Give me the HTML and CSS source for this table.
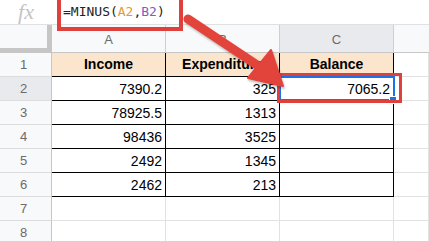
FILE: index.html
```html
<!DOCTYPE html>
<html>
<head>
<meta charset="utf-8">
<link rel="stylesheet" href="styles.css">
</head>
<body>
<div class="page">
  <div class="formula-bar">
    <span class="fx">fx</span>
    <span class="formula">=MINUS(<span class="ref-a">A2</span>,<span class="ref-b">B2</span>)</span>
  </div>
  <div class="sheet">
    <div class="corner"></div>
    <div class="ch">A</div>
    <div class="ch">B</div>
    <div class="ch ch-active">C</div>
    <div class="ch ch-last"></div>

    <div class="rh">1</div>
    <div class="c t hd">Income</div>
    <div class="c t hd">Expenditure</div>
    <div class="c t hd">Balance</div>
    <div class="c"></div>

    <div class="rh rh-active">2</div>
    <div class="c t">7390.2</div>
    <div class="c t">325</div>
    <div class="c t sel">7065.2</div>
    <div class="c"></div>

    <div class="rh">3</div>
    <div class="c t">78925.5</div>
    <div class="c t">1313</div>
    <div class="c t"></div>
    <div class="c"></div>

    <div class="rh">4</div>
    <div class="c t">98436</div>
    <div class="c t">3525</div>
    <div class="c t"></div>
    <div class="c"></div>

    <div class="rh">5</div>
    <div class="c t">2492</div>
    <div class="c t">1345</div>
    <div class="c t"></div>
    <div class="c"></div>

    <div class="rh">6</div>
    <div class="c t">2462</div>
    <div class="c t">213</div>
    <div class="c t"></div>
    <div class="c"></div>

    <div class="rh">7</div>
    <div class="c"></div>
    <div class="c"></div>
    <div class="c"></div>
    <div class="c"></div>

    <div class="rh">8</div>
    <div class="c"></div>
    <div class="c"></div>
    <div class="c"></div>
    <div class="c"></div>
  </div>

  <div class="mark mark-formula"></div>
  <div class="mark mark-cell"></div>
  <svg class="arrow" width="429" height="241" viewBox="0 0 429 241">
    <line x1="188" y1="19" x2="260" y2="67" stroke="#e2433b" stroke-width="9" stroke-linecap="round"/>
    <polygon points="248,78 271,50 283,86" fill="#e2433b" stroke="#e2433b" stroke-width="2" stroke-linejoin="round"/>
  </svg>
</div>
</body>
</html>
```

FILE: styles.css
```css
html, body {
  margin: 0;
  padding: 0;
  background: #ffffff;
}

.page {
  position: relative;
  width: 429px;
  height: 241px;
  overflow: hidden;
  font-family: "Liberation Sans", Arial, sans-serif;
  color: #000;
}

.formula-bar {
  display: flex;
  align-items: center;
  height: 25px;
  box-sizing: border-box;
  border-bottom: 1px solid #e1e1e1;
}

.fx {
  width: 52px;
  text-align: center;
  font-family: "Liberation Serif", "DejaVu Serif", serif;
  font-style: italic;
  font-size: 22px;
  line-height: 24px;
  color: #c4c4c4;
  margin-top: -1px;
}

.formula {
  padding-left: 11px;
  font-family: "DejaVu Sans Mono", "Liberation Mono", monospace;
  font-size: 13px;
  line-height: 24px;
  color: #222;
  margin-top: -1px;
}

.ref-a { color: #e59a2f; }
.ref-b { color: #7e5bc6; }

.sheet {
  display: grid;
  grid-template-columns: 52px 114px 114px 114px 1fr;
  grid-template-rows: 28px repeat(8, 24px);
}

.corner {
  box-sizing: border-box;
  background: #f8f9fa;
  border-right: 5px solid #c6c6c6;
  border-bottom: 5px solid #c6c6c6;
}

.ch {
  box-sizing: border-box;
  background: #f8f9fa;
  border-right: 1px solid #cfcfcf;
  border-bottom: 1px solid #c6c6c6;
  display: flex;
  align-items: center;
  justify-content: center;
  font-size: 13px;
  color: #6b6b6b;
  padding-top: 1px;
}

.ch-active { background: #e8eaed; }
.ch-last { border-right: none; }

.rh {
  box-sizing: border-box;
  background: #f8f9fa;
  border-right: 1px solid #c6c6c6;
  border-bottom: 1px solid #dcdcdc;
  display: flex;
  align-items: center;
  justify-content: center;
  font-size: 13px;
  color: #6b6b6b;
  padding-right: 4px;
}

.rh-active { background: #e8eaed; }

.c {
  box-sizing: border-box;
  border-right: 1px solid #e2e2e3;
  border-bottom: 1px solid #e2e2e3;
  display: flex;
  align-items: flex-end;
  justify-content: flex-end;
  padding: 0 3px 4px 0;
  font-size: 14px;
  line-height: 14px;
  white-space: nowrap;
  overflow: hidden;
}

.t {
  border-right-color: #000;
  border-bottom-color: #000;
}

.hd {
  background: #fce5cd;
  font-weight: bold;
  justify-content: center;
  padding: 0 0 5px 0;
}

.sel {
  position: relative;
  overflow: visible;
}

.sel::before {
  content: "";
  position: absolute;
  top: -1px;
  left: -1px;
  right: -2px;
  bottom: -1px;
  border: 2px solid #1a73e8;
}

.sel::after {
  content: "";
  position: absolute;
  right: -4px;
  bottom: -4px;
  width: 6px;
  height: 6px;
  background: #1a73e8;
  border: 1px solid #ffffff;
  z-index: 2;
}

.mark {
  position: absolute;
  box-sizing: border-box;
  border-style: solid;
  border-color: #e0403b;
  z-index: 3;
}

.mark-formula {
  left: 57px;
  top: -4px;
  width: 126px;
  height: 35px;
  border-width: 4px;
}

.mark-cell {
  left: 277px;
  top: 73px;
  width: 125px;
  height: 30px;
  border-width: 3px;
}

.arrow {
  position: absolute;
  left: 0;
  top: 0;
  z-index: 4;
  filter: drop-shadow(1px 2px 1px rgba(0, 0, 0, 0.25));
}
```
